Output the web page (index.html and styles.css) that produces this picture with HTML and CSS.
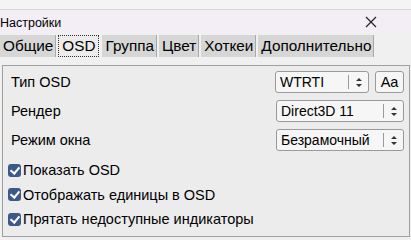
FILE: index.html
```html
<!DOCTYPE html>
<html lang="ru">
<head>
  <meta charset="UTF-8">
  <title>Настройки</title>
  <link rel="stylesheet" href="styles.css">
</head>
<body>
  <div class="window">
    <div class="topband"></div>
    <div class="titlebar">
      <span class="title">Настройки</span>
      <svg class="close" width="12" height="12" viewBox="0 0 12 12">
        <path d="M1 1 L11 11 M11 1 L1 11" stroke="#222" stroke-width="1.2" fill="none"/>
      </svg>
    </div>
    <div class="tabs">
      <div class="tab">Общие</div>
      <div class="tab active">OSD</div>
      <div class="tab">Группа</div>
      <div class="tab">Цвет</div>
      <div class="tab">Хоткеи</div>
      <div class="tab">Дополнительно</div>
    </div>
    <div class="panel">
      <div class="row">
        <span class="label">Тип OSD</span>
        <div class="controls">
          <div class="select small">
            <span class="value">WTRTI</span>
            <span class="arrow"><svg width="6" height="9" viewBox="0 0 6 9"><path d="M3 0 L6 3 L0 3 Z M0 6 L6 6 L3 9 Z" fill="#333"/></svg></span>
          </div>
          <button class="btn">Aa</button>
        </div>
      </div>
      <div class="row">
        <span class="label">Рендер</span>
        <div class="select">
          <span class="value">Direct3D 11</span>
          <span class="arrow"><svg width="6" height="9" viewBox="0 0 6 9"><path d="M3 0 L6 3 L0 3 Z M0 6 L6 6 L3 9 Z" fill="#333"/></svg></span>
        </div>
      </div>
      <div class="row">
        <span class="label">Режим окна</span>
        <div class="select">
          <span class="value">Безрамочный</span>
          <span class="arrow"><svg width="6" height="9" viewBox="0 0 6 9"><path d="M3 0 L6 3 L0 3 Z M0 6 L6 6 L3 9 Z" fill="#333"/></svg></span>
        </div>
      </div>
      <label class="check"><span class="box"></span>Показать OSD</label>
      <label class="check"><span class="box"></span>Отображать единицы в OSD</label>
      <label class="check"><span class="box"></span>Прятать недоступные индикаторы</label>
    </div>
  </div>
</body>
</html>
```

FILE: styles.css
```css
body {
  margin: 0;
  font-family: 'Liberation Sans', Arial, sans-serif;
  color: #000;
  background: #f0f0f0;
  width: 411px;
  height: 240px;
  overflow: hidden;
}
.window {
  display: flex;
  flex-direction: column;
  height: 240px;
}
.topband {
  height: 9px;
  background: #f4f4f4;
  border-bottom: 1px solid #d8d8d8;
}
.titlebar {
  height: 23px;
  background: #f3eef6;
  display: flex;
  align-items: center;
  justify-content: space-between;
  padding: 0 34px 0 0;
  font-size: 12.5px;
}
.title {
  margin-top: 2px;
}
.close {
  margin-top: 1px;
}
.tabs {
  display: flex;
  height: 22px;
  margin-top: 2px;
  font-size: 15.3px;
  background: #f0f0f0;
}
.tab {
  background: #d6d6d6;
  padding: 0 2px 0 3px;
  margin-right: 2px;
  border-right: 1px solid #a8a8a8;
  line-height: 22px;
}
.tab.active {
  background: #ececec;
  outline: 1px dotted #333;
  outline-offset: -1px;
  border-right: none;
  padding: 0 4px;
  margin-right: 3px;
}
.panel {
  margin: 8px 1px 3px 2px;
  border: 1px solid #a0a0a0;
  background: #ececec;
  flex: 1;
  padding: 5px 5px 0 7px;
  font-size: 14.5px;
}
.row {
  display: flex;
  justify-content: space-between;
  align-items: center;
  height: 22px;
  margin-bottom: 7px;
}
.label {
  padding-left: 1px;
}
.controls {
  display: flex;
  gap: 6px;
}
.select {
  width: 128px;
  height: 22px;
  box-sizing: border-box;
  border: 1px solid #9a9a9a;
  border-radius: 3px;
  background: #f6f6f6;
  display: flex;
  align-items: center;
  font-size: 14px;
}
.select.small {
  width: 94px;
}
.value {
  flex: 1;
  padding-left: 4px;
}
.arrow {
  width: 19px;
  height: 14px;
  border-left: 1px solid #9a9a9a;
  display: flex;
  align-items: center;
  justify-content: center;
}
.btn {
  width: 29px;
  height: 22px;
  border: 1px solid #9a9a9a;
  border-radius: 3px;
  background: #f6f6f6;
  font-family: 'Liberation Sans', Arial, sans-serif;
  font-size: 14.5px;
  padding: 0;
}
.check {
  display: flex;
  align-items: center;
  height: 24.5px;
  margin-left: -2px;
}
.box {
  width: 13px;
  height: 13px;
  border-radius: 3px;
  background: #3b5a8a;
  margin-right: 2px;
  position: relative;
}
.box::after {
  content: '';
  position: absolute;
  left: 4px;
  top: 1px;
  width: 4px;
  height: 7px;
  border: solid #fff;
  border-width: 0 2px 2px 0;
  transform: rotate(40deg);
}
```
